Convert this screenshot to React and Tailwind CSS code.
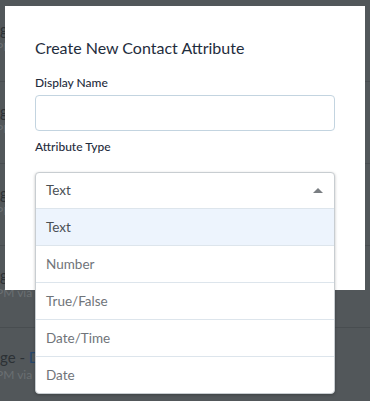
import React from 'react';

const rows = [0, 1, 2, 3, 4];
const options = ['Text', 'Number', 'True/False', 'Date/Time', 'Date'];

export default function App() {
    return (
        <div className="relative w-[370px] h-[401px] overflow-hidden bg-[#52575a]" style={{ fontFamily: 'Lato, "Open Sans", sans-serif' }}>
            {/* page behind the overlay */}
            <div className="flex flex-col">
                {rows.map((r) => (
                    <div key={r} className="h-[82px] border-b border-[#484d50] pt-[19px]">
                        <div className={r < 4 ? 'w-[5px] overflow-hidden' : 'w-[35px] overflow-hidden'}>
                            <div className="text-[15px] leading-[20px] text-[#2c3135] whitespace-nowrap">
                                ge - <span className="text-[#26466b]">Dashboard</span>
                            </div>
                        </div>
                        <div className={r < 3 ? 'w-[5px] overflow-hidden' : 'w-[35px] overflow-hidden'}>
                            <div className="text-[12px] leading-[16px] text-[#6a6f72] whitespace-nowrap ml-[-4px]">PM via Dashboard</div>
                        </div>
                    </div>
                ))}
            </div>

            {/* modal */}
            <div className="absolute left-[5px] top-[6px] w-[360px] h-[284px] bg-white">
                <div className="flex flex-col px-[30px] pt-[30px]">
                    <h2 className="text-[16px] leading-[24px] text-[#1f2d3d]">Create New Contact Attribute</h2>
                    <label className="mt-[15px] text-[12px] leading-[16px] font-medium text-[#1f2d3d]">Display Name</label>
                    <input className="mt-[4px] h-[36px] w-[300px] rounded-[4px] border border-[#c3d4e0] outline-none" />
                    <label className="mt-[8px] text-[12px] leading-[16px] font-medium text-[#1f2d3d]">Attribute Type</label>
                </div>
            </div>

            {/* open select */}
            <div className="absolute left-[35px] top-[172px] w-[300px] bg-white rounded-[4px] border border-[#c8cdd1] shadow-[0_1px_3px_rgba(0,0,0,0.25)] overflow-hidden">
                <div className="h-[35px] flex items-center justify-between pl-[10px] pr-[11px] text-[13.5px] text-[#4a4f54]">
                    <span>Text</span>
                    <svg width="10" height="5" viewBox="0 0 10 5"><path d="M0 5 L5 0 L10 5 Z" fill="#7a7e82" /></svg>
                </div>
                {options.map((o, i) => (
                    <div
                        key={o}
                        className={
                            i === 0
                                ? 'h-[37px] flex items-center pl-[10px] border-t border-[#dde5ec] bg-[#edf4fd] text-[13.5px] text-[#4a4f54]'
                                : 'h-[37px] flex items-center pl-[10px] border-t border-[#dde5ec] text-[13.5px] text-[#707479]'
                        }
                    >
                        {o}
                    </div>
                ))}
            </div>
        </div>
    );
}
